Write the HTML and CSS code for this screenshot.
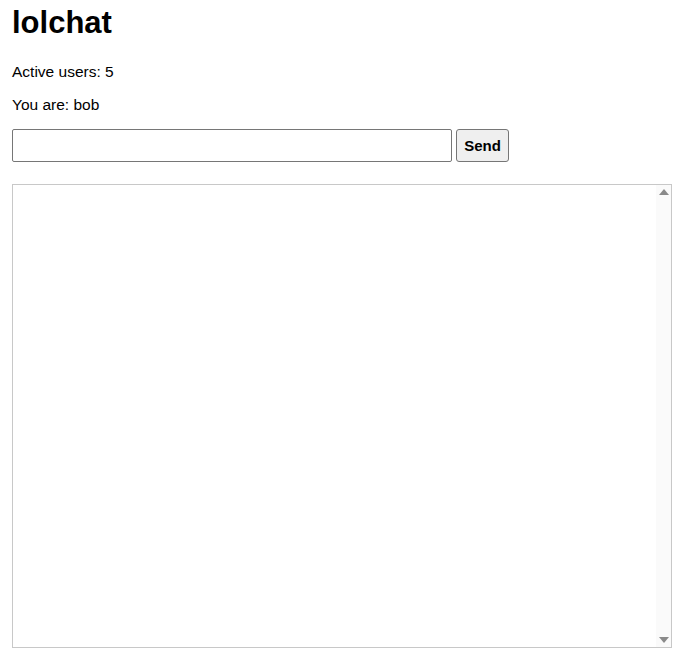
FILE: index.html
```html
<!DOCTYPE html>
<html>
<head>
<meta charset="utf-8">
<link rel="stylesheet" href="styles.css">
</head>
<body>
<h1 class="title">lolchat</h1>
<p class="info">Active users: 5</p>
<p class="info">You are: bob</p>
<form class="send-form">
<input class="msg-input" type="text">
<button class="send-btn" type="button">Send</button>
</form>
<div class="log">
  <div class="log-content"></div>
  <div class="scrollbar">
    <span class="arrow arrow-up"></span>
    <span class="arrow arrow-down"></span>
  </div>
</div>
</body>
</html>
```
FILE: styles.css
```css
html, body {
  margin: 0;
  padding: 0;
  background: #fff;
}
body {
  padding: 0 12px;
  font-family: "Liberation Sans", Arial, sans-serif;
  font-size: 15.5px;
  color: #000;
}
.title {
  font-size: 31px;
  font-weight: bold;
  margin: 6px 0 0;
  line-height: 34px;
}
.info {
  margin: 0;
  margin-top: 15px;
  line-height: 18px;
}
.info:first-of-type {
  margin-top: 23px;
}
.send-form {
  display: flex;
  gap: 4px;
  margin-top: 15px;
}
.msg-input {
  width: 440px;
  height: 33px;
  box-sizing: border-box;
  border: 1px solid #767676;
  border-radius: 2px;
  padding: 0 4px;
  font-family: "Liberation Sans", Arial, sans-serif;
  font-size: 15px;
  margin: 0;
}
.send-btn {
  width: 53px;
  height: 33px;
  box-sizing: border-box;
  border: 1px solid #767676;
  border-radius: 3px;
  background: #efefef;
  font-family: "Liberation Sans", Arial, sans-serif;
  font-weight: bold;
  font-size: 15px;
  margin: 0;
  padding: 0;
  color: #000;
}
.log {
  margin-top: 22px;
  width: 660px;
  height: 464px;
  box-sizing: border-box;
  border: 1px solid #c8c8c8;
  display: flex;
}
.log-content {
  flex: 1;
}
.scrollbar {
  width: 15px;
  background: #fafafa;
  display: flex;
  flex-direction: column;
  justify-content: space-between;
  align-items: center;
  padding: 4px 0;
}
.arrow {
  width: 0;
  height: 0;
  border-left: 5px solid transparent;
  border-right: 5px solid transparent;
}
.arrow-up {
  border-bottom: 6px solid #8a8a8a;
}
.arrow-down {
  border-top: 6px solid #8a8a8a;
}
```
